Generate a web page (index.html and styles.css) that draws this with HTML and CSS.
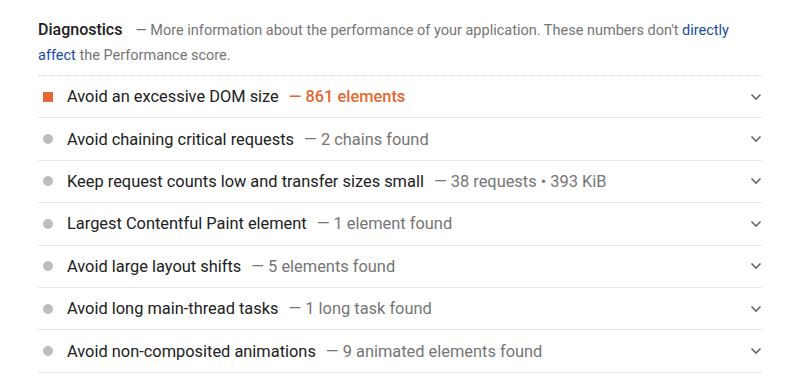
FILE: index.html
```html
<!DOCTYPE html>
<html lang="en">
<head>
  <meta charset="UTF-8">
  <title>Diagnostics</title>
  <link rel="stylesheet" href="styles.css">
</head>
<body>
  <section class="diagnostics">
    <div class="group-header">
      <span class="group-title">Diagnostics</span>
      <span class="group-desc"> — More information about the performance of your application. These numbers don't <a href="#">directly affect</a> the Performance score.</span>
    </div>
    <ul class="audits">
      <li class="audit">
        <span class="icon square"></span>
        <span class="audit-title">Avoid an excessive DOM size</span>
        <span class="audit-value warn">— 861 elements</span>
        <span class="chevron"><svg width="12" height="8" viewBox="0 0 12 8"><path d="M1.5 1.5 L6 6 L10.5 1.5" fill="none" stroke="#666" stroke-width="1.6"/></svg></span>
      </li>
      <li class="audit">
        <span class="icon dot"></span>
        <span class="audit-title">Avoid chaining critical requests</span>
        <span class="audit-value">— 2 chains found</span>
        <span class="chevron"><svg width="12" height="8" viewBox="0 0 12 8"><path d="M1.5 1.5 L6 6 L10.5 1.5" fill="none" stroke="#666" stroke-width="1.6"/></svg></span>
      </li>
      <li class="audit">
        <span class="icon dot"></span>
        <span class="audit-title">Keep request counts low and transfer sizes small</span>
        <span class="audit-value">— 38 requests • 393 KiB</span>
        <span class="chevron"><svg width="12" height="8" viewBox="0 0 12 8"><path d="M1.5 1.5 L6 6 L10.5 1.5" fill="none" stroke="#666" stroke-width="1.6"/></svg></span>
      </li>
      <li class="audit">
        <span class="icon dot"></span>
        <span class="audit-title">Largest Contentful Paint element</span>
        <span class="audit-value">— 1 element found</span>
        <span class="chevron"><svg width="12" height="8" viewBox="0 0 12 8"><path d="M1.5 1.5 L6 6 L10.5 1.5" fill="none" stroke="#666" stroke-width="1.6"/></svg></span>
      </li>
      <li class="audit">
        <span class="icon dot"></span>
        <span class="audit-title">Avoid large layout shifts</span>
        <span class="audit-value">— 5 elements found</span>
        <span class="chevron"><svg width="12" height="8" viewBox="0 0 12 8"><path d="M1.5 1.5 L6 6 L10.5 1.5" fill="none" stroke="#666" stroke-width="1.6"/></svg></span>
      </li>
      <li class="audit">
        <span class="icon dot"></span>
        <span class="audit-title">Avoid long main-thread tasks</span>
        <span class="audit-value">— 1 long task found</span>
        <span class="chevron"><svg width="12" height="8" viewBox="0 0 12 8"><path d="M1.5 1.5 L6 6 L10.5 1.5" fill="none" stroke="#666" stroke-width="1.6"/></svg></span>
      </li>
      <li class="audit">
        <span class="icon dot"></span>
        <span class="audit-title">Avoid non-composited animations</span>
        <span class="audit-value">— 9 animated elements found</span>
        <span class="chevron"><svg width="12" height="8" viewBox="0 0 12 8"><path d="M1.5 1.5 L6 6 L10.5 1.5" fill="none" stroke="#666" stroke-width="1.6"/></svg></span>
      </li>
    </ul>
  </section>
</body>
</html>
```

FILE: styles.css
```css
body {
  margin: 0;
  background: #fff;
  font-family: Roboto, "Liberation Sans", Arial, sans-serif;
  color: #212121;
}

.diagnostics {
  width: 724px;
  margin-left: 38px;
  padding-top: 18px;
}

.group-header {
  line-height: 24px;
  padding-bottom: 7px;
  border-bottom: 1px dotted #d6d6d6;
}

.group-title {
  font-size: 16px;
  font-weight: 500;
  color: #212121;
  margin-right: 9px;
}

.group-desc {
  font-size: 14.5px;
  color: #757575;
}

.group-desc a {
  color: #1a4aa5;
  text-decoration: none;
}

.audits {
  list-style: none;
  margin: 0;
  padding: 0;
}

.audit {
  display: flex;
  align-items: center;
  height: 41.4px;
  border-bottom: 1px solid #e6e6e6;
  font-size: 16.4px;
}

.icon {
  width: 10px;
  height: 10px;
  margin-left: 5px;
  margin-right: 14px;
  flex-shrink: 0;
}

.square {
  background: #e8673a;
}

.dot {
  border-radius: 50%;
  background: #bdbdbd;
}

.audit-title {
  color: #212121;
}

.audit-value {
  margin-left: 10px;
  color: #757575;
}

.audit-value.warn {
  color: #e4672f;
  font-weight: 500;
}

.chevron {
  margin-left: auto;
  display: flex;
}
```
